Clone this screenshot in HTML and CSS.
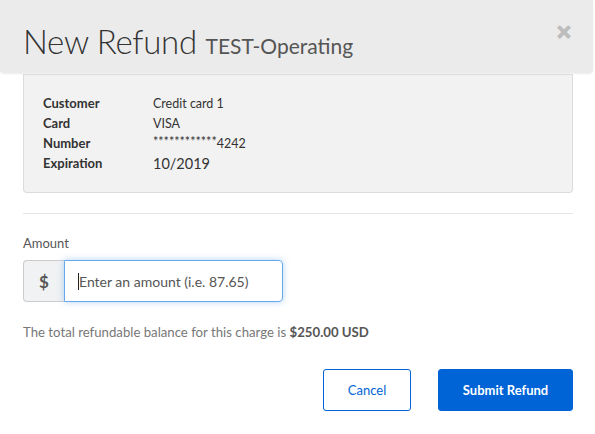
FILE: index.html
```html
<!DOCTYPE html>
<html>
<head>
<meta charset="utf-8">
<link rel="stylesheet" href="styles.css">
</head>
<body>
<div class="modal">
  <div class="modal-header">
    <h1 class="title">New Refund <small class="subtitle">TEST-Operating</small></h1>
    <span class="close">&#x2715;</span>
  </div>
  <div class="modal-body">
    <div class="card">
      <div class="row"><span class="label">Customer</span><span class="value">Credit card 1</span></div>
      <div class="row"><span class="label">Card</span><span class="value">VISA</span></div>
      <div class="row"><span class="label">Number</span><span class="value"><span class="stars">************</span>4242</span></div>
      <div class="row"><span class="label">Expiration</span><span class="value big">10/2019</span></div>
    </div>
    <hr class="divider">
    <label class="field-label">Amount</label>
    <div class="input-group">
      <span class="addon">$</span>
      <div class="input"><span class="caret"></span><span class="placeholder">Enter an amount (i.e. 87.65)</span></div>
    </div>
    <p class="balance">The total refundable balance for this charge is <strong>$250.00 USD</strong></p>
    <div class="actions">
      <button class="btn btn-outline">Cancel</button>
      <button class="btn btn-primary">Submit Refund</button>
    </div>
  </div>
</div>
</body>
</html>
```

FILE: styles.css
```css
html, body {
  margin: 0;
  padding: 0;
  background: #fff;
  font-family: "Lato", "Open Sans", sans-serif;
  color: #333;
}
.modal {
  width: 595px;
  height: 434px;
  position: relative;
}
.modal-header {
  width: 593px;
  height: 73px;
  box-sizing: border-box;
  background: #ebebeb;
  border-radius: 0 0 4px 4px;
  box-shadow: 0 1px 2px rgba(0,0,0,0.08);
  display: flex;
  align-items: flex-start;
  justify-content: space-between;
  padding: 21px 21px 0 23px;
  position: relative;
  z-index: 1;
}
.title {
  margin: 0;
  font-weight: 300;
  font-size: 33px;
  line-height: 40px;
  color: #333;
  letter-spacing: -0.3px;
}
.subtitle {
  font-size: 21px;
  font-weight: 400;
  color: #555;
  letter-spacing: 0;
}
.close {
  font-size: 19px;
  font-weight: 700;
  color: #bdbdbd;
  line-height: 20px;
  margin-top: 1px;
  -webkit-text-stroke: 1.2px #bdbdbd;
}
.modal-body {
  padding: 0 22px 0 23px;
}
.card {
  margin-top: 1px;
  height: 119px;
  box-sizing: border-box;
  background: #f2f2f2;
  border: 1px solid #dcdcdc;
  border-top-color: #e2e2e2;
  border-radius: 0 0 4px 4px;
  padding: 18px 19px;
}
.row {
  display: flex;
  height: 20px;
  align-items: center;
  font-size: 13px;
}
.label {
  width: 110px;
  font-weight: 700;
  color: #333;
}
.value {
  color: #333;
  font-size: 12.5px;
}
.value.big {
  font-size: 14.5px;
}
.stars {
  position: relative;
  top: -2px;
}
.divider {
  margin: 20px 0 0 0;
  border: 0;
  border-top: 1px solid #e6e6e6;
  height: 0;
}
.field-label {
  display: block;
  margin-top: 21px;
  font-size: 13px;
  line-height: 16px;
  color: #555;
}
.input-group {
  display: flex;
  margin-top: 9px;
  height: 42px;
}
.addon {
  width: 41px;
  box-sizing: border-box;
  background: #f0f2f4;
  border: 1px solid #ccc;
  border-right: 0;
  border-radius: 4px 0 0 4px;
  display: flex;
  align-items: center;
  justify-content: center;
  font-size: 17px;
  font-weight: 700;
  color: #555;
}
.input {
  width: 219px;
  box-sizing: border-box;
  border: 1px solid #66a8ea;
  border-radius: 0 4px 4px 0;
  box-shadow: 0 0 6px rgba(102,168,234,0.5);
  display: flex;
  align-items: center;
  padding-left: 13px;
  font-size: 14px;
  color: #555;
}
.caret {
  width: 1px;
  height: 17px;
  background: #222;
}
.balance {
  margin: 22px 0 0 0;
  font-size: 13.2px;
  line-height: 16px;
  color: #777;
}
.balance strong {
  color: #555;
}
.actions {
  display: flex;
  justify-content: flex-end;
  gap: 27px;
  margin-top: 29px;
}
.btn {
  height: 42px;
  box-sizing: border-box;
  border-radius: 3px;
  font-family: inherit;
  font-size: 13px;
  font-weight: 700;
  cursor: pointer;
}
.btn-outline {
  width: 88px;
  background: #fff;
  border: 1px solid #0064d7;
  color: #0064d7;
  font-weight: 400;
}
.btn-primary {
  width: 135px;
  background: #0064d7;
  border: 1px solid #0064d7;
  color: #fff;
}
```
